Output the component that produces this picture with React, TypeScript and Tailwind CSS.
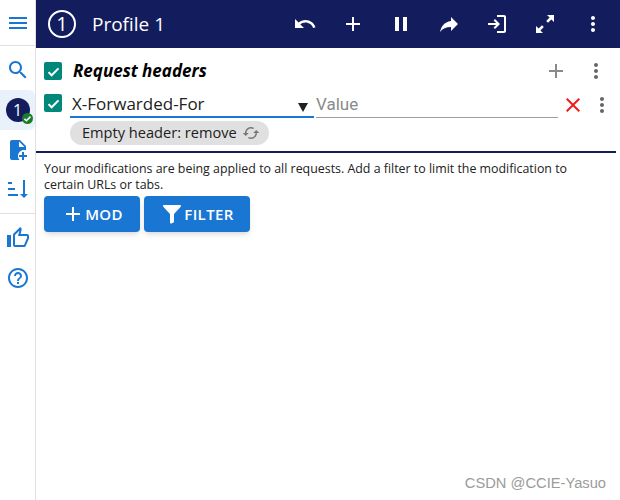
const ICONS = {
  menu: "M3 18h18v-2H3v2zm0-5h18v-2H3v2zm0-7v2h18V6H3z",
  search: "M15.5 14h-.79l-.28-.27C15.41 12.59 16 11.11 16 9.5 16 5.91 13.09 3 9.5 3S3 5.91 3 9.5 5.91 16 9.5 16c1.61 0 3.09-.59 4.23-1.57l.27.28v.79l5 4.99L20.49 19l-4.99-5zm-6 0C7.01 14 5 11.99 5 9.5S7.01 5 9.5 5 14 7.01 14 9.5 11.99 14 9.5 14z",
  fileAdd: "M13 9h5.5L13 3.5V9M6 2h8l6 6v4.34c-.63-.22-1.3-.34-2-.34-3.31 0-6 2.69-6 6 0 1.46.53 2.81 1.41 3.86-.03.05-.07.09-.11.14H6c-1.11 0-2-.9-2-2V4c0-1.11.89-2 2-2m12 12v3h3v2h-3v3h-2v-3h-3v-2h3v-3h2z",
  sort: "M19 17h3l-4 4-4-4h3V3h2M2 17h10v2H2M6 5v2H2V5M2 11h7v2H2v-2z",
  thumb: "M9 21h9c.83 0 1.54-.5 1.84-1.22l3.02-7.05c.09-.23.14-.47.14-.73v-2c0-1.1-.9-2-2-2h-6.31l.95-4.57.03-.32c0-.41-.17-.79-.44-1.06L14.17 1 7.58 7.59C7.22 7.95 7 8.45 7 9v10c0 1.1.9 2 2 2zM9 9l4.34-4.34L12 10h9v2l-3 7H9V9zM1 9h4v12H1z",
  help: "M11 18h2v-2h-2v2zm1-16C6.48 2 2 6.48 2 12s4.48 10 10 10 10-4.48 10-10S17.52 2 12 2zm0 18c-4.41 0-8-3.59-8-8s3.59-8 8-8 8 3.59 8 8-3.59 8-8 8zm0-14c-2.21 0-4 1.79-4 4h2c0-1.1.9-2 2-2s2 .9 2 2c0 2-3 1.75-3 5h2c0-2.25 3-2.5 3-5 0-2.21-1.79-4-4-4z",
  undo: "M12.5 8c-2.65 0-5.05.99-6.9 2.6L2 7v9h9l-3.62-3.62c1.39-1.16 3.16-1.88 5.12-1.88 3.54 0 6.55 2.31 7.6 5.5l2.37-.78C21.08 11.03 17.15 8 12.5 8z",
  plus: "M19 13h-6v6h-2v-6H5v-2h6V5h2v6h6v2z",
  pause: "M6 19h4V5H6v14zm8-14v14h4V5h-4z",
  redo: "M14 9V5l7 7-7 7v-4.1c-5 0-8.5 1.6-11 5.1 1-5 4-10 11-11z",
  login: "M10 7 8.6 8.4 11.2 11H3v2h8.2l-2.6 2.6L10 17l5-5-5-5zm9 12h-7v2h7c1.1 0 2-.9 2-2V5c0-1.1-.9-2-2-2h-7v2h7v14z",
  expand: "M14 3h7v7l-2.6-2.6-3.4 3.4-1.8-1.8 3.4-3.4zM10 21H3v-7l2.6 2.6 3.4-3.4 1.8 1.8-3.4 3.4z",
  dots: "M12 8c1.1 0 2-.9 2-2s-.9-2-2-2-2 .9-2 2 .9 2 2 2zm0 2c-1.1 0-2 .9-2 2s.9 2 2 2 2-.9 2-2-.9-2-2-2zm0 6c-1.1 0-2 .9-2 2s.9 2 2 2 2-.9 2-2-.9-2-2-2z",
  close: "M19 6.41 17.59 5 12 10.59 6.41 5 5 6.41 10.59 12 5 17.59 6.41 19 12 13.41 17.59 19 19 17.59 13.41 12z",
  filter: "M3 4c0-.55.45-1 1-1h16c.55 0 1 .45 1 1 0 .25-.1.5-.27.68L14 12v7.5c0 .4-.2.75-.55.92l-2 1c-.66.33-1.45-.15-1.45-.92V12L3.27 4.68A1 1 0 0 1 3 4z",
  cached: "M19 8l-4 4h3c0 3.31-2.69 6-6 6-1.01 0-1.97-.25-2.8-.7l-1.46 1.46C8.97 19.54 10.43 20 12 20c4.42 0 8-3.58 8-8h3l-4-4zM6 12c0-3.31 2.69-6 6-6 1.01 0 1.97.25 2.8.7l1.46-1.46C15.03 4.46 13.57 4 12 4c-4.42 0-8 3.58-8 8H1l4 4 4-4H6z",
}

function Icon({ d, className }: { d: string; className: string }) {
  return (
    <svg viewBox="0 0 24 24" fill="currentColor" className={className}>
      <path d={d} />
    </svg>
  )
}

function Check() {
  return (
    <div className="flex h-[18px] w-[18px] shrink-0 items-center justify-center rounded-[2px] bg-[#00897b]">
      <svg viewBox="0 0 24 24" fill="none" stroke="white" strokeWidth="3.2" className="h-[15px] w-[15px]">
        <path d="M4 13l5 5L20 7" />
      </svg>
    </div>
  )
}

function Sidebar() {
  return (
    <aside className="flex w-9 shrink-0 flex-col items-center border-r border-[#e0e0e0] text-[#1976d2]">
      <div className="flex h-[46px] w-full items-center justify-center border-b border-[#e0e0e0]">
        <Icon d={ICONS.menu} className="h-6 w-6" />
      </div>
      <div className="flex h-11 w-full items-center justify-center pt-[3px]">
        <Icon d={ICONS.search} className="h-6 w-6" />
      </div>
      <div className="flex h-10 w-full items-center justify-center rounded-r-md bg-[#e9f2fb]">
        <div className="relative flex h-6 w-6 items-center justify-center rounded-full bg-[#131d5e] text-[16px] text-white">
          1
          <div className="absolute -right-[3px] -bottom-[2px] flex h-[11px] w-[11px] items-center justify-center rounded-full bg-[#1b7d2c]">
            <svg viewBox="0 0 24 24" fill="none" stroke="white" strokeWidth="4" className="h-[9px] w-[9px]">
              <path d="M4 13l5 5L20 7" />
            </svg>
          </div>
        </div>
      </div>
      <div className="flex h-10 w-full items-center justify-center">
        <Icon d={ICONS.fileAdd} className="h-6 w-6" />
      </div>
      <div className="flex h-[38px] w-full items-center justify-center">
        <Icon d={ICONS.sort} className="h-6 w-6" />
      </div>
      <div className="mt-[5px] h-px w-full bg-[#e0e0e0]" />
      <div className="flex h-12 w-full items-center justify-center">
        <Icon d={ICONS.thumb} className="h-6 w-6" />
      </div>
      <div className="flex h-8 w-full items-center justify-center">
        <Icon d={ICONS.help} className="h-6 w-6" />
      </div>
    </aside>
  )
}

function Header() {
  return (
    <header className="flex h-12 items-center bg-[#131d5e] pl-3 text-white">
      <div className="flex h-7 w-7 items-center justify-center rounded-full border-2 border-white text-[20px]">1</div>
      <div className="ml-[16px] w-[201px] text-[19px]">Profile 1</div>
      <div className="flex items-center gap-6">
        <Icon d={ICONS.undo} className="h-6 w-6" />
        <Icon d={ICONS.plus} className="h-6 w-6" />
        <Icon d={ICONS.pause} className="h-6 w-6" />
        <Icon d={ICONS.redo} className="h-6 w-6" />
        <Icon d={ICONS.login} className="h-6 w-6" />
        <Icon d={ICONS.expand} className="h-6 w-6" />
        <Icon d={ICONS.dots} className="h-6 w-6" />
      </div>
    </header>
  )
}

export default function App() {
  return (
    <div className="relative flex h-[500px] w-[620px] overflow-hidden bg-white font-['Open_Sans','Noto_Sans',sans-serif] text-[#212121]">
      <Sidebar />
      <div className="flex min-w-0 flex-1 flex-col">
        <Header />
        <div className="mr-1 border-b-2 border-[#131d5e] pb-[6px]">
          <div className="flex h-[46px] items-center pl-2 pr-2">
            <Check />
            <div className="ml-[11px] flex-1 text-[17px] font-bold italic text-black">Request headers</div>
            <Icon d={ICONS.plus} className="mr-4 h-6 w-6 text-[#8a8a8a]" />
            <Icon d={ICONS.dots} className="h-6 w-6 text-[#666666]" />
          </div>
          <div className="flex h-[24px] items-start pl-2">
            <Check />
            <div className="ml-2 flex h-[24px] w-[244px] items-center justify-between border-b-2 border-[#1976d2] pr-[6px] text-[17px]">
              <span className="-mt-[2px] pl-[2px]">X-Forwarded-For</span>
              <span className="mt-1 h-0 w-0 border-x-[5px] border-t-[9px] border-x-transparent border-t-[#212121]" />
            </div>
            <div className="ml-[2px] flex h-[24px] w-[242px] items-center border-b border-[#9e9e9e] pb-[2px] font-['Roboto',sans-serif] text-[17px] text-[#8a8a8a]">
              Value
            </div>
            <Icon d={ICONS.close} className="-mt-[1px] ml-[3px] h-6 w-6 text-[#f41a1a]" />
            <Icon d={ICONS.dots} className="-mt-[1px] ml-[5px] h-6 w-6 text-[#666666]" />
          </div>
          <div className="ml-[34px] mt-[3px] flex h-6 w-[199px] items-center gap-[5px] rounded-full bg-[#e0e0e0] pl-3 text-[14.6px]">
            <span>Empty header: remove</span>
            <Icon d={ICONS.cached} className="h-[18px] w-[18px] text-[#777777]" />
          </div>
        </div>
        <div className="px-2 pt-[8px]">
          <p className="w-[540px] text-[12.4px] leading-4 text-[#212121]">
            Your modifications are being applied to all requests. Add a filter to limit the modification to certain URLs or tabs.
          </p>
          <div className="mt-[3px] flex gap-1">
            <button className="flex h-9 w-24 items-center justify-center rounded bg-[#1976d2] text-[15px] font-semibold tracking-wide text-white shadow-md">
              <Icon d={ICONS.plus} className="h-6 w-6" />
              MOD
            </button>
            <button className="flex h-9 w-[106px] items-center justify-center rounded bg-[#1976d2] text-[15px] font-semibold tracking-wide text-white shadow-md">
              <Icon d={ICONS.filter} className="h-6 w-6" />
              FILTER
            </button>
          </div>
        </div>
      </div>
      <div className="absolute bottom-[6px] right-[14px] font-['Liberation_Sans',sans-serif] text-[14.7px] text-[#9b9b9b]">CSDN @CCIE-Yasuo</div>
    </div>
  )
}
